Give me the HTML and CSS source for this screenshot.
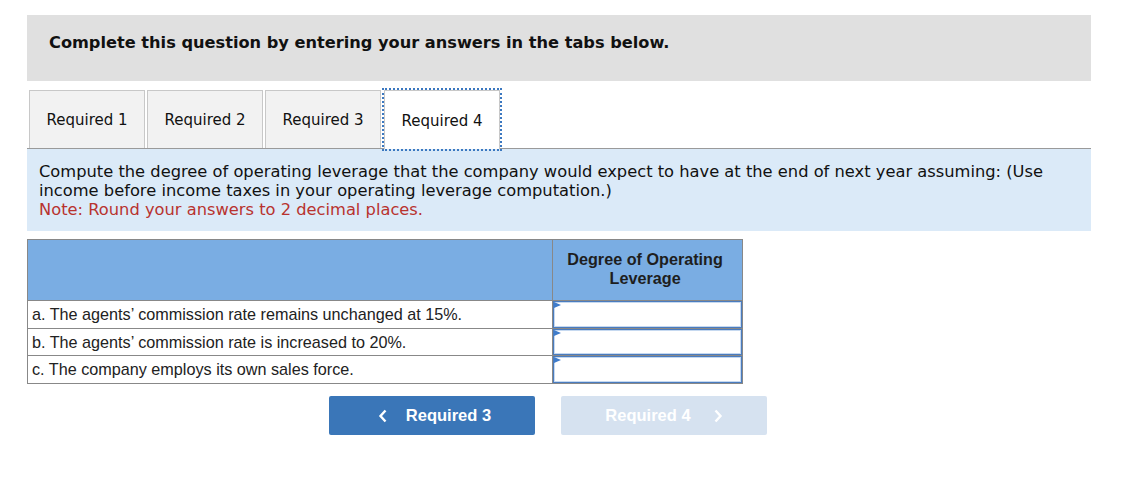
FILE: index.html
```html
<!DOCTYPE html>
<html>
<head>
<meta charset="utf-8">
<link rel="stylesheet" href="styles.css">
</head>
<body>
<div class="page">
  <div class="banner">Complete this question by entering your answers in the tabs below.</div>
  <div class="tabs">
    <div class="tab">Required 1</div>
    <div class="tab">Required 2</div>
    <div class="tab">Required 3</div>
    <div class="tab active">Required 4</div>
  </div>
  <div class="prompt">
    <p>Compute the degree of operating leverage that the company would expect to have at the end of next year assuming: (Use income before income taxes in your operating leverage computation.)</p>
    <p class="note">Note: Round your answers to 2 decimal places.</p>
  </div>
  <table class="grid">
    <tr class="head">
      <th class="label-col"></th>
      <th class="val-col">Degree of Operating<br>Leverage</th>
    </tr>
    <tr class="r1">
      <td class="label">a. The agents’ commission rate remains unchanged at 15%.</td>
      <td class="cell"><div class="input"></div></td>
    </tr>
    <tr class="r2">
      <td class="label">b. The agents’ commission rate is increased to 20%.</td>
      <td class="cell"><div class="input"></div></td>
    </tr>
    <tr class="r3">
      <td class="label">c. The company employs its own sales force.</td>
      <td class="cell"><div class="input"></div></td>
    </tr>
  </table>
  <div class="nav">
    <button class="btn prev"><svg width="10" height="14" viewBox="0 0 10 14"><polyline points="7.5,1.5 2.5,7 7.5,12.5" fill="none" stroke="#fff" stroke-width="2.4"/></svg><span>Required 3</span></button>
    <button class="btn next"><span>Required 4</span><svg width="10" height="14" viewBox="0 0 10 14"><polyline points="2.5,1.5 7.5,7 2.5,12.5" fill="none" stroke="#fff" stroke-width="2.4"/></svg></button>
  </div>
</div>
</body>
</html>
```
FILE: styles.css
```css
* { box-sizing: border-box; }
body {
  margin: 0;
  background: #fff;
  font-family: "DejaVu Sans", Verdana, sans-serif;
  color: #111;
}
.page {
  width: 1064px;
  margin: 15px 0 0 27px;
}
.banner {
  height: 66px;
  background: #e0e0e0;
  padding: 18px 0 0 22px;
  font-weight: bold;
  font-size: 16.2px;
  line-height: 20px;
}
.tabs {
  display: flex;
  gap: 2px;
  margin-top: 9px;
  padding-left: 2px;
  border-bottom: 1px solid #9a9a9a;
  height: 59px;
}
.tab {
  width: 116px;
  height: 58px;
  background: #f2f2f2;
  border: 1px solid #c8c8c8;
  border-bottom: none;
  display: flex;
  align-items: center;
  justify-content: center;
  font-size: 15px;
  padding-top: 1px;
  color: #111;
}
.tab.active {
  background: #fff;
  height: 59px;
  margin-left: 1px;
  width: 116px;
  border-color: #c8c8c8;
  outline: 2px dotted #3b78c0;
  outline-offset: 0px;
  position: relative;
}
.prompt {
  background: #dbeaf8;
  padding: 13px 20px 12px 12px;
  font-size: 16.3px;
  line-height: 19px;
  color: #111;
}
.prompt p { margin: 0; }
.prompt .note { color: #b8332f; }
.grid {
  margin-top: 8px;
  border-collapse: collapse;
  width: 716px;
  font-family: "Liberation Sans", Arial, sans-serif;
}
.grid th, .grid td {
  border: 1px solid #888;
  padding: 0;
}
.head th {
  height: 61px;
  background: #7aade3;
  font-size: 16.2px;
  font-weight: bold;
  line-height: 19px;
  color: #1e1e1e;
  vertical-align: top;
  padding-top: 10px;
}
.head th.val-col { padding-right: 5px; }
.label-col { width: 526px; }
.val-col { width: 190px; }
.label {
  font-size: 16.2px;
  color: #222;
  padding-left: 4px !important;
  padding-top: 0 !important;
  vertical-align: middle;
}
.r1 td { height: 28px; }
.r2 td { height: 27px; }
.r3 td { height: 28px; }
.cell { background: #fff; }
.input {
  position: relative;
  height: 100%;
  min-height: 25px;
  border: 1px solid #4a7cbf;
  box-shadow: inset 0 0 0 1px #c6d9f0;
  background: #fff;
}
.input::before {
  content: "";
  position: absolute;
  left: 0;
  top: 0;
  border-left: 7px solid #3f7ccb;
  border-top: 3px solid transparent;
  border-bottom: 3px solid transparent;
}
.nav {
  display: flex;
  gap: 26px;
  margin-top: 12px;
  padding-left: 302px;
}
.btn {
  width: 206px;
  height: 39px;
  border: none;
  border-radius: 2px;
  display: flex;
  align-items: center;
  justify-content: center;
  gap: 18px;
  font-family: "Liberation Sans", Arial, sans-serif;
  font-weight: bold;
  font-size: 16.5px;
  color: #fff;
  padding: 0;
}
.btn.prev { background: #3a76b8; padding-left: 5px; }
.btn.next { background: #d6e2f0; gap: 22px; }
.btn svg { display: block; }
```
